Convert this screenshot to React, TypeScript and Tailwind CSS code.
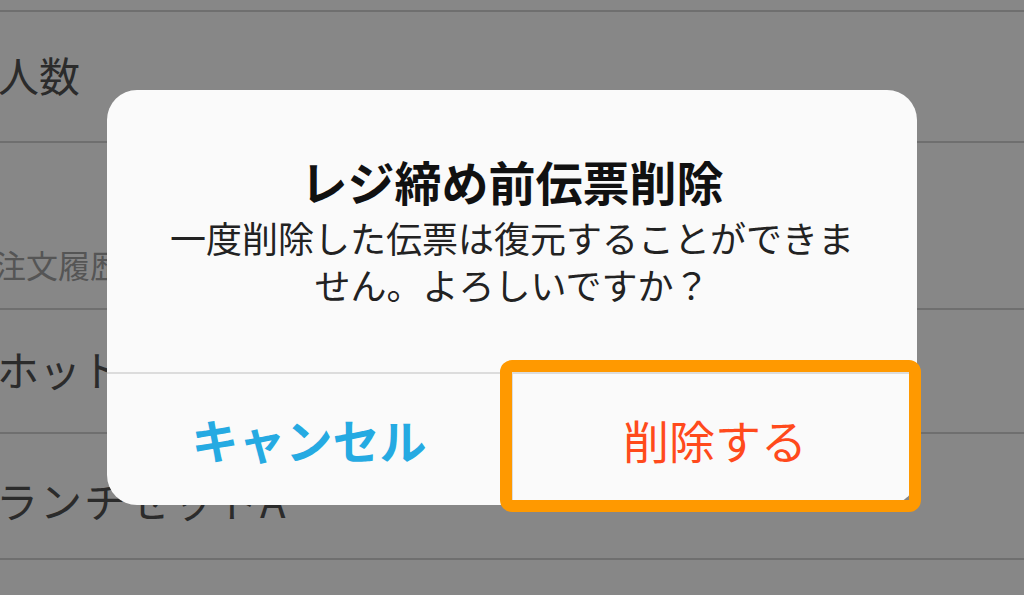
export default function App() {
  const font = { fontFamily: '"Noto Sans CJK JP", "Noto Sans", sans-serif' };

  return (
    <div
      className="relative h-[595px] w-[1024px] overflow-hidden bg-[#878787] text-[#2b2b2b]"
      style={font}
    >
      {/* background list, dimmed */}
      <div className="flex flex-col">
        <div className="h-[12px] border-b-2 border-[#6f6f6f]" />
        <div className="flex h-[131px] items-center border-b-2 border-[#6f6f6f] pb-[4px]">
          <span className="-ml-[2px] whitespace-nowrap text-[41px] leading-none">人数</span>
        </div>
        <div className="flex h-[167px] items-end border-b-2 border-[#6f6f6f] pb-[28px]">
          <span className="-ml-[6px] whitespace-nowrap text-[32px] leading-none text-[#555]">注文履歴</span>
        </div>
        <div className="flex h-[124px] items-center border-b-2 border-[#6f6f6f] pb-[4px]">
          <span className="-ml-[3px] whitespace-nowrap text-[42px] leading-none">ホットコーヒー</span>
        </div>
        <div className="flex h-[126px] items-center border-b-2 border-[#6f6f6f] pt-[8px]">
          <span className="-ml-[4px] whitespace-nowrap text-[42px] tracking-[2px] leading-none">ランチセットA</span>
        </div>
      </div>

      {/* alert dialog */}
      <div className="absolute left-[107px] top-[90px] flex h-[415px] w-[810px] flex-col overflow-hidden rounded-[30px] bg-[#fafafa]">
        <div className="flex h-[282px] flex-col items-center pt-[64px]">
          <h1 className="text-[47px] font-bold leading-[54px] text-[#111]">
            レジ締め前伝票削除
          </h1>
          <p className="mt-[6px] w-[720px] text-center text-[36px] leading-[47px] text-[#222]">
            一度削除した伝票は復元することができま
            <br />
            せん。よろしいですか？
          </p>
        </div>
        <div className="flex flex-1 border-t-2 border-[#dcdcdc]">
          <button className="flex flex-1 items-center justify-center text-[47px] font-bold text-[#25aae2]">
            キャンセル
          </button>
          <button className="flex flex-1 items-center justify-center border-l-2 border-[#dcdcdc] text-[46px] text-[#ff4a1c]">
            削除する
          </button>
        </div>
      </div>

      {/* highlight frame */}
      <div className="absolute left-[500px] top-[360px] h-[152px] w-[421px] rounded-[12px] border-[12px] border-[#ff9900]" />
    </div>
  );
}
